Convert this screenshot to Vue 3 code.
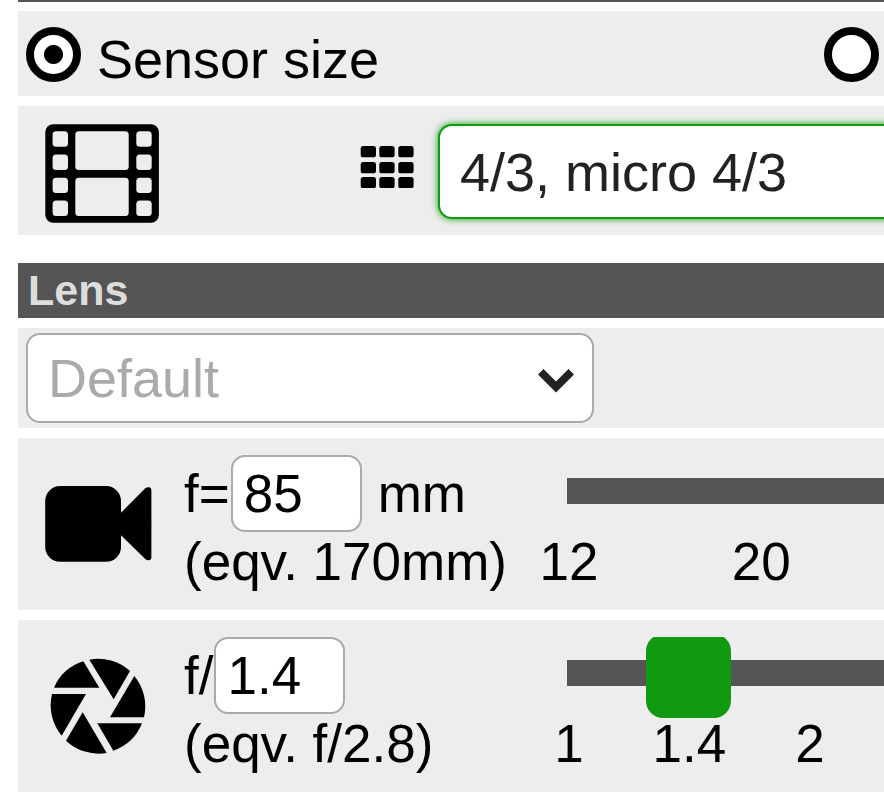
<script setup>
import { ref } from 'vue'

const mode = ref('sensor')
const sensor = ref('4/3, micro 4/3')
const preset = ref('Default')
const focal = ref('85')
const aperture = ref('1.4')

const focalPos = ref(1.958)
const stopPos = ref(1)

// gap: distance to the next mark, in percent of the scale's length
const focalTicks = [
  { label: '12', gap: 22.75 },
  { label: '20', gap: 22.75 },
]
const stopTicks = [
  { label: '1', gap: 14.25 },
  { label: '1.4', gap: 14.25 },
  { label: '2', gap: 14.25 },
]

const filmHoles = [7.3, 30.5, 53.7, 76.5]
const gridCols = [0.7, 19.3, 38.3]
const gridRows = [0, 16, 31]
</script>

<template>
  <main class="calc">
    <div class="bar-edge"></div>

    <div class="row modes">
      <label class="option">
        <input v-model="mode" class="radio" type="radio" name="mode" value="sensor" />
        <span>Sensor size</span>
      </label>
      <input v-model="mode" class="radio" type="radio" name="mode" value="other" aria-label="Other" />
    </div>

    <div class="row sensor">
      <svg class="film" width="114" height="99" viewBox="0 0 114 99" aria-hidden="true">
        <rect x="0.3" y="0.2" width="113.6" height="98.6" rx="8" />
        <g class="hole">
          <template v-for="y in filmHoles" :key="y">
            <rect x="7.6" :y="y" width="15.4" height="15.4" rx="3.5" />
            <rect x="91.3" :y="y" width="15.4" height="15.4" rx="3.5" />
          </template>
          <rect x="30.3" y="7.3" width="53.4" height="38.7" rx="3.5" />
          <rect x="30.3" y="53.7" width="53.4" height="38.2" rx="3.5" />
        </g>
      </svg>
      <svg class="grid-icon" width="54" height="42" viewBox="0 0 54 42" aria-hidden="true">
        <template v-for="y in gridRows" :key="y">
          <rect v-for="x in gridCols" :key="x" :x="x" :y="y" width="15.3" height="11.3" rx="2.6" />
        </template>
      </svg>
      <select v-model="sensor" class="select sensor-select" aria-label="Sensor size">
        <option>4/3, micro 4/3</option>
      </select>
    </div>

    <h2 class="heading">Lens</h2>

    <div class="row preset">
      <div class="preset-box">
        <select v-model="preset" class="select preset-select" aria-label="Lens">
          <option>Default</option>
        </select>
        <svg class="chevron" width="36" height="24" viewBox="0 0 36 24" aria-hidden="true">
          <path d="M0 5.5 5.5 0 18 12.5 30.5 0 36 5.5 18 23.5z" />
        </svg>
      </div>
    </div>

    <div class="row setting">
      <svg class="symbol" width="107" height="76" viewBox="0 0 107 76" aria-hidden="true">
        <rect x="0.2" y="0" width="75.8" height="75.8" rx="15" />
        <path d="M75 27.7 100 2.6Q102 .8 104.3 1.3 106.4 1.8 106.4 4V71.5Q106.4 73.7 104.3 74.2 102 74.7 100 72.8L75 48.3z" />
      </svg>
      <div class="values">
        <div class="entry">
          <label for="focal">f=</label>
          <input id="focal" v-model="focal" class="number" type="text" />
          <span class="unit">mm</span>
        </div>
        <div class="equivalent">(eqv. 170mm)</div>
      </div>
      <div class="scale">
        <input v-model="focalPos" class="slider" type="range" min="0" max="2.265" step="any" aria-label="f=" />
        <div class="ticks">
          <span v-for="t in focalTicks" :key="t.label" class="tick" :style="{ marginRight: t.gap + '%' }">{{ t.label }}</span>
        </div>
      </div>
    </div>

    <div class="row setting">
      <svg class="symbol" width="107" height="96" viewBox="135 144 321 288" aria-hidden="true">
        <path d="M162 233H298L250 154A143 143 0 0 0 162 233z" />
        <path d="M268 149 341 268 390 183A143 143 0 0 0 268 149z" />
        <path d="M403 198 330 322H432A143 143 0 0 0 403 198z" />
        <path d="M426 340H292L340 422A143 143 0 0 0 426 340z" />
        <path d="M320 429 248 307 198 392A143 143 0 0 0 320 429z" />
        <path d="M185 377 258 252H156A143 143 0 0 0 185 377z" />
      </svg>
      <div class="values">
        <div class="entry">
          <label for="aperture">f/</label>
          <input id="aperture" v-model="aperture" class="number" type="text" />
        </div>
        <div class="equivalent">(eqv. f/2.8)</div>
      </div>
      <div class="scale">
        <input v-model="stopPos" class="slider" type="range" min="0" max="7" step="any" aria-label="f/" />
        <div class="ticks">
          <span v-for="t in stopTicks" :key="t.label" class="tick" :style="{ marginRight: t.gap + '%' }">{{ t.label }}</span>
        </div>
      </div>
    </div>
  </main>
</template>

<style>
body {
  background: #fff;
}
</style>

<style scoped>
.calc,
.calc * {
  box-sizing: border-box;
}

.calc {
  display: flex;
  flex-direction: column;
  gap: 10px;
  padding: 0 0 8px 18px;
  overflow: hidden;
  color: #000;
  font-family: "Liberation Sans", Arial, sans-serif;
  font-size: 54px;
}

.bar-edge {
  height: 2px;
  margin-bottom: -1px;
  background: #555;
}

.row {
  display: flex;
  background: #ededed;
}

.modes {
  justify-content: space-between;
  padding: 16px 5px 5px 8px;
}

.option {
  display: flex;
  gap: 16px;
  line-height: 64px;
}

.radio {
  flex: none;
  appearance: none;
  width: 55px;
  height: 55px;
  margin: 0;
  border: 8px solid #000;
  border-radius: 50%;
  background: #fff;
}

.radio:checked {
  background: radial-gradient(circle, #000 9px, #fff 10px);
}

.sensor {
  padding: 18px 0 16px 27px;
}

.film {
  flex: none;
  margin-bottom: -4px;
}

.hole {
  fill: #ededed;
}

.grid-icon {
  flex: none;
  margin: 22px 24px 0 201px;
}

.select {
  appearance: none;
  margin: 0;
  padding: 0 20px;
  border: 2px solid #aaa;
  border-radius: 14px;
  background: #fff;
  font: inherit;
}

.sensor-select {
  flex: 1;
  height: 95px;
  margin-right: -24px;
  border-color: #119911;
  box-shadow: 0 0 7px #119911;
  color: #222;
}

.heading {
  margin: 18px 0 0;
  padding: 0 10px;
  background: #555;
  color: #ddd;
  font-size: 43px;
  font-weight: bold;
  line-height: 55px;
}

.preset {
  padding: 5px 8px;
}

.preset-box {
  position: relative;
  flex: 1;
  max-width: 568px;
}

.preset-select {
  display: block;
  width: 100%;
  height: 90px;
  color: #aaa;
}

.chevron {
  position: absolute;
  top: 36px;
  right: 20px;
  fill: #222;
  pointer-events: none;
}

.setting {
  padding: 17px 0 18px 27px;
  font-size: 53px;
}

.symbol {
  flex: none;
  align-self: center;
  margin: 0 32px 0 0;
}

.values {
  flex: 0 0 341px;
}

.entry {
  display: flex;
  height: 77px;
  line-height: 77px;
}

.number {
  width: 131px;
  height: 77px;
  margin: 0 16px 0 1px;
  padding: 0 11px;
  border: 2px solid #aaa;
  border-radius: 14px;
  background: #fff;
  color: #000;
  font: inherit;
}

.equivalent {
  line-height: 60px;
  white-space: nowrap;
}

.scale {
  flex: 1;
  min-width: 0;
  overflow: hidden;
}

.slider {
  appearance: none;
  display: block;
  width: 260%;
  height: 85px;
  margin: -4px 0 0;
  background: linear-gradient(#555, #555) 42px 27px / 100% 26px no-repeat;
}

.slider::-webkit-slider-thumb {
  appearance: none;
  width: 85px;
  height: 84px;
  border-radius: 17px;
  background: #119911;
}

.slider::-moz-range-thumb {
  width: 85px;
  height: 84px;
  border: 0;
  border-radius: 17px;
  background: #119911;
}

.ticks {
  display: flex;
  width: 260%;
  padding: 0 44px;
  line-height: 52px;
}

.tick {
  display: flex;
  flex: none;
  justify-content: center;
  width: 0;
}
</style>
